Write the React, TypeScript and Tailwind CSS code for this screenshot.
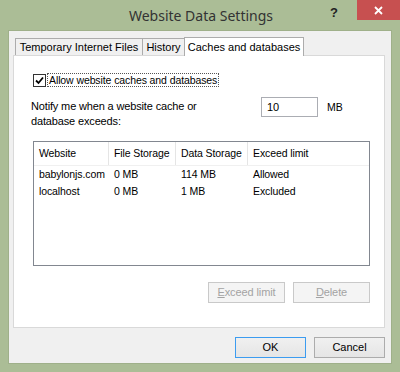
import React from "react";

const font = { fontFamily: '"Liberation Sans", Arial, sans-serif' };
const titleFont = { fontFamily: '"Noto Sans", "Open Sans", sans-serif' };

function Tab({ label, selected, w }: { label: string; selected?: boolean; w: string }) {
  if (selected) {
    return (
      <div className={`${w} h-[19px] -mb-px relative z-10 bg-white border border-[#acacac] border-b-0 flex items-center justify-center text-[11px] text-black whitespace-nowrap`}>
        {label}
      </div>
    );
  }
  return (
    <div className={`${w} h-[17px] bg-[#f0f0f0] border border-[#acacac] border-b-0 -mr-px flex items-center justify-center text-[11px] text-black whitespace-nowrap`}>
      {label}
    </div>
  );
}

function Btn({ label, u, rest, disabled, def, w }: { label?: string; u?: string; rest?: string; disabled?: boolean; def?: boolean; w: string }) {
  const cls = disabled
    ? "border-[#c9c9c9] bg-[#f4f4f4] text-[#a3a3a3]"
    : def
    ? "border-[#3c9cf0] bg-gradient-to-b from-[#f0f0f0] to-[#e5e5e5] text-black"
    : "border-[#acacac] bg-gradient-to-b from-[#f0f0f0] to-[#e5e5e5] text-black";
  return (
    <div className={`${w} h-[21px] border ${cls} flex items-center justify-center text-[11px] whitespace-nowrap`}>
      {u ? (
        <span>
          <span className="underline">{u}</span>
          {rest}
        </span>
      ) : (
        label
      )}
    </div>
  );
}

export default function App() {
  const rows = [
    ["babylonjs.com", "0 MB", "114 MB", "Allowed"],
    ["localhost", "0 MB", "1 MB", "Excluded"],
  ];
  return (
    <div style={font} className="w-[400px] h-[372px] bg-[#abbd96] flex flex-col px-[8px] pb-[8px] overflow-hidden">
      {/* title bar */}
      <div className="h-[30px] flex relative">
        <div style={titleFont} className="flex-1 flex items-center justify-center text-[14px] text-[#333333] pl-[2px] pt-[1px]">
          Website Data Settings
        </div>
        <div className="absolute right-[-8px] top-0 flex">
          <div className="w-[22px] h-[20px] flex items-center justify-center text-[13px] font-bold text-[#222] mr-[12px] pt-[6px]">?</div>
          <div className="w-[43px] h-[20px] bg-[#c75050] flex items-center justify-center">
            <svg width="9" height="9" viewBox="0 0 9 9">
              <path d="M1 1 L8 8 M8 1 L1 8" stroke="white" strokeWidth="1.8" />
            </svg>
          </div>
        </div>
      </div>

      {/* client */}
      <div className="flex-1 bg-[#f0f0f0] border border-[#9fb08a] flex flex-col pl-[4px] pr-[6px] pt-[6px]">
        {/* tabs */}
        <div className="flex items-end pl-[2px]">
          <Tab label="Temporary Internet Files" w="w-[128px]" />
          <Tab label="History" w="w-[43px]" />
          <Tab label="Caches and databases" selected w="w-[120px]" />
        </div>
        {/* panel */}
        <div className="h-[273px] bg-white border border-[#d9d9d9] flex flex-col pl-[19px] pr-[16px] text-[10.5px] tracking-[-0.1px] text-black">
          {/* checkbox */}
          <div className="flex items-center mt-[17px] h-[14px]">
            <div className="w-[13px] h-[13px] border border-[#333] bg-white flex items-center justify-center">
              <svg width="9" height="9" viewBox="0 0 9 9">
                <path d="M1 4.5 L3.5 7 L8 1.5" stroke="black" strokeWidth="1.8" fill="none" />
              </svg>
            </div>
            <div className="ml-[1px] border border-dotted border-[#555] px-px leading-[12px] whitespace-nowrap">
              Allow website caches and databases
            </div>
          </div>
          {/* notify */}
          <div className="flex mt-[12px] -ml-[2px]">
            <div className="leading-[15px] w-[200px] text-[11px] tracking-[-0.15px]">
              Notify me when a website cache or
              <br />
              database exceeds:
            </div>
            <div className="ml-[30px] mt-[-2px] w-[57px] h-[20px] border border-[#abadb3] bg-white flex items-center pl-[5px] text-[11px]">
              10
            </div>
            <div className="ml-[9px] mt-[1px]">MB</div>
          </div>
          {/* list */}
          <div className="mt-[12px] w-[337px] h-[125px] border border-[#828790] flex flex-col">
            <div className="flex h-[24px] items-center border-b border-[#f0f0f0]">
              <div className="w-[75px] pl-[5px] border-r border-[#e5e5e5] h-full flex items-center whitespace-nowrap">Website</div>
              <div className="w-[67px] pl-[5px] border-r border-[#e5e5e5] h-full flex items-center whitespace-nowrap">File Storage</div>
              <div className="w-[72px] pl-[5px] border-r border-[#e5e5e5] h-full flex items-center whitespace-nowrap">Data Storage</div>
              <div className="flex-1 pl-[5px] h-full flex items-center whitespace-nowrap">Exceed limit</div>
            </div>
            {rows.map((r) => (
              <div key={r[0]} className="flex h-[17px] items-center whitespace-nowrap">
                <div className="w-[75px] pl-[5px]">{r[0]}</div>
                <div className="w-[67px] pl-[5px]">{r[1]}</div>
                <div className="w-[72px] pl-[5px]">{r[2]}</div>
                <div className="flex-1 pl-[5px]">{r[3]}</div>
              </div>
            ))}
          </div>
          {/* list buttons */}
          <div className="flex justify-end gap-[8px] mt-[16px] w-[337px]">
            <Btn u="E" rest="xceed limit" disabled w="w-[77px]" />
            <Btn u="D" rest="elete" disabled w="w-[77px]" />
          </div>
        </div>
        {/* dialog buttons */}
        <div className="flex justify-end gap-[8px] mt-[9px]">
          <Btn label="OK" def w="w-[71px]" />
          <Btn label="Cancel" w="w-[71px]" />
        </div>
      </div>
    </div>
  );
}
